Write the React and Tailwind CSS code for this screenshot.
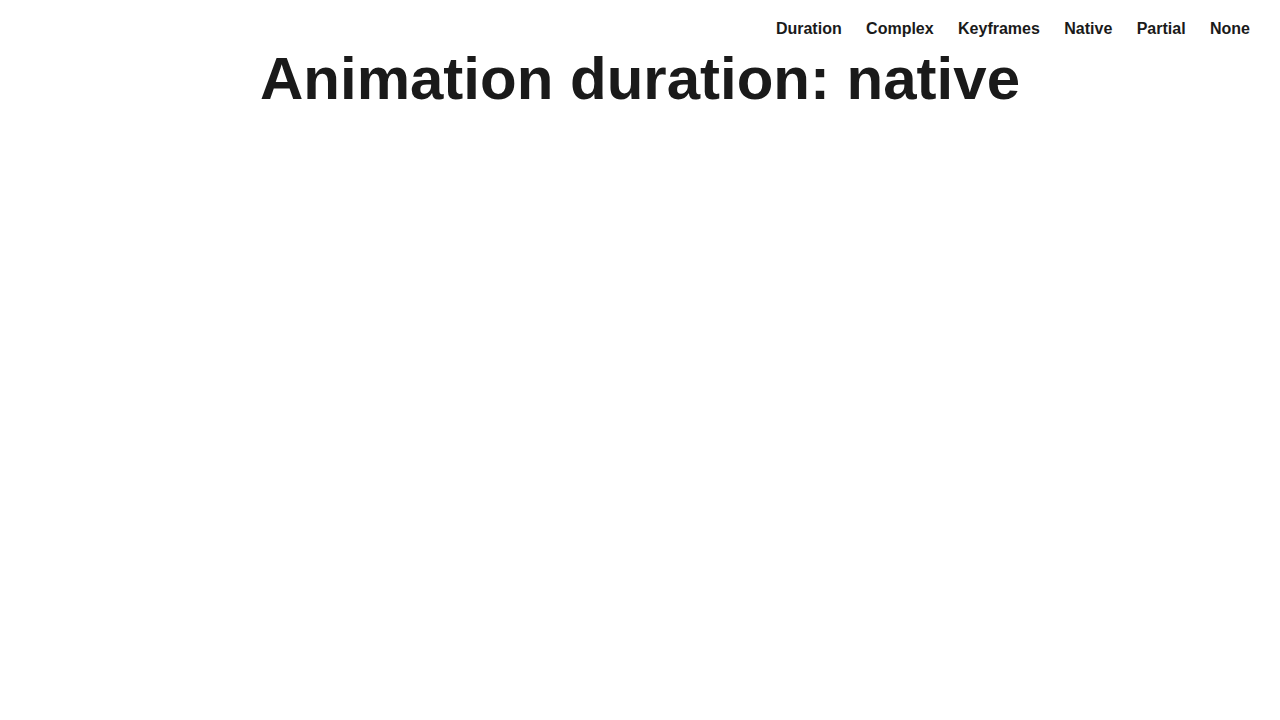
const LINKS = ['Duration', 'Complex', 'Keyframes', 'Native', 'Partial', 'None'];

export default function App() {
  return (
    <div className="min-h-[720px] bg-white text-[#1a1a1a]" style={{ fontFamily: '"Liberation Sans", Arial, sans-serif' }}>
      <nav className="flex justify-end gap-[24.4px] pr-[30px] pt-[19px]">
        {LINKS.map((l) => (
          <a key={l} href="#" className="text-base font-bold leading-[19px]">
            {l}
          </a>
        ))}
      </nav>
      <h1 className="mt-[6px] text-center text-[60px] font-bold leading-[69px]">
        Animation duration: native
      </h1>
    </div>
  );
}
